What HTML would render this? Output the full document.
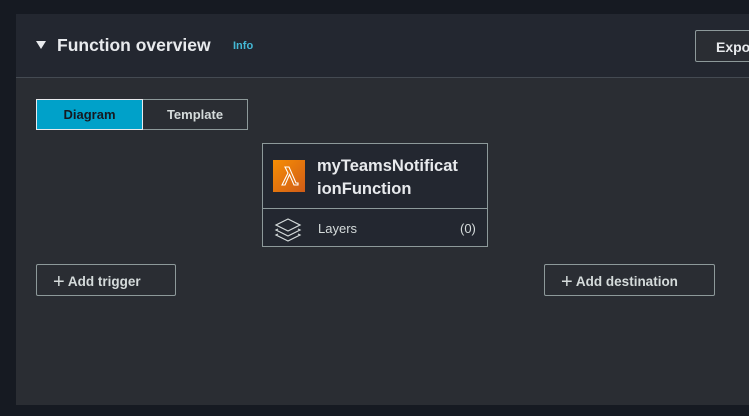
<!DOCTYPE html>
<html><head><style>
*{margin:0;padding:0;box-sizing:border-box}
body{width:749px;height:416px;background:#161a22;font-family:"Liberation Sans",sans-serif;position:relative;overflow:hidden;color:#e8eaed}
.panel{position:absolute;left:16px;top:14px;width:740px;height:391px;background:#2a2d33}
.hdr{position:absolute;left:0;top:0;width:100%;height:64px;background:#232730;border-bottom:1px solid #444a52}
.abs{position:absolute}
.btn{position:absolute;border:1px solid #8d999a;border-radius:2px;font-weight:bold;font-size:13.5px;color:#d5dbdb}
</style></head><body>
<div class="panel">
<div class="hdr">
<div class="abs" style="left:20px;top:27px;width:0;height:0;border-left:5px solid transparent;border-right:5px solid transparent;border-top:8px solid #e8eaed"></div>
<div class="abs" style="left:41px;top:21px;font-size:17.5px;font-weight:bold;color:#e8eaed">Function overview</div>
<div class="abs" style="left:217px;top:26px;font-size:11px;font-weight:bold;color:#44b9d6">Info</div>
<div class="btn" style="left:679px;top:16px;width:80px;height:32px;background:#2a2d33;padding:8px 0 0 20px;font-size:14px;color:#e8eaed">Export</div>
</div>
</div>
<div class="abs" style="left:36px;top:99px;width:107px;height:31px;background:#00a1c9;border:1px solid #e8eaed;font-size:13px;font-weight:bold;color:#16191f;text-align:center;line-height:29px">Diagram</div>
<div class="abs" style="left:143px;top:99px;width:105px;height:31px;border:1px solid #8d999a;border-left:none;font-size:13px;font-weight:bold;color:#d5dbdb;text-align:center;line-height:29px">Template</div>
<div class="abs" style="left:262px;top:143px;width:226px;height:104px;border:1px solid #8d999a;background:#232730">
<div class="abs" style="left:10px;top:16px;width:32px;height:32px;background:linear-gradient(135deg,#f78e04,#d05c17)">
<svg width="32" height="32" viewBox="0 0 32 32"><path d="M9 25 L15 13 L12 7 L16 7 L23 23 L25 23 L25 25 L21 25 L16.5 14.5 L12 25 Z" fill="none" stroke="#fff" stroke-width="1.1"/></svg></div>
<div class="abs" style="left:54px;top:11px;font-size:16.5px;font-weight:bold;line-height:23px;color:#e8eaed;width:172px">myTeamsNotificat<br>ionFunction</div>
<div class="abs" style="left:0;top:64px;width:100%;border-top:1px solid #8d999a"></div>
<svg class="abs" style="left:11px;top:72px" width="28" height="28" viewBox="0 0 28 28" fill="none" stroke="#d5dbdb" stroke-width="1.2"><path d="M14 3 L26 9 L14 15 L2 9 Z"/><path d="M4 13 L2 14 L14 20 L26 14 L24 13"/><path d="M4 18 L2 19 L14 25 L26 19 L24 18"/></svg>
<div class="abs" style="left:55px;top:77px;font-size:13px;color:#d5dbdb">Layers</div>
<div class="abs" style="left:197px;top:77px;font-size:13px;color:#d5dbdb">(0)</div>
</div>
<div class="btn" style="left:36px;top:264px;width:140px;height:32px;padding:6px 0 0 16px"><span style="font-size:20px;font-weight:normal;vertical-align:-2px">+</span> Add trigger</div>
<div class="btn" style="left:544px;top:264px;width:171px;height:32px;padding:6px 0 0 16px"><span style="font-size:20px;font-weight:normal;vertical-align:-2px">+</span> Add destination</div>
</body></html>
